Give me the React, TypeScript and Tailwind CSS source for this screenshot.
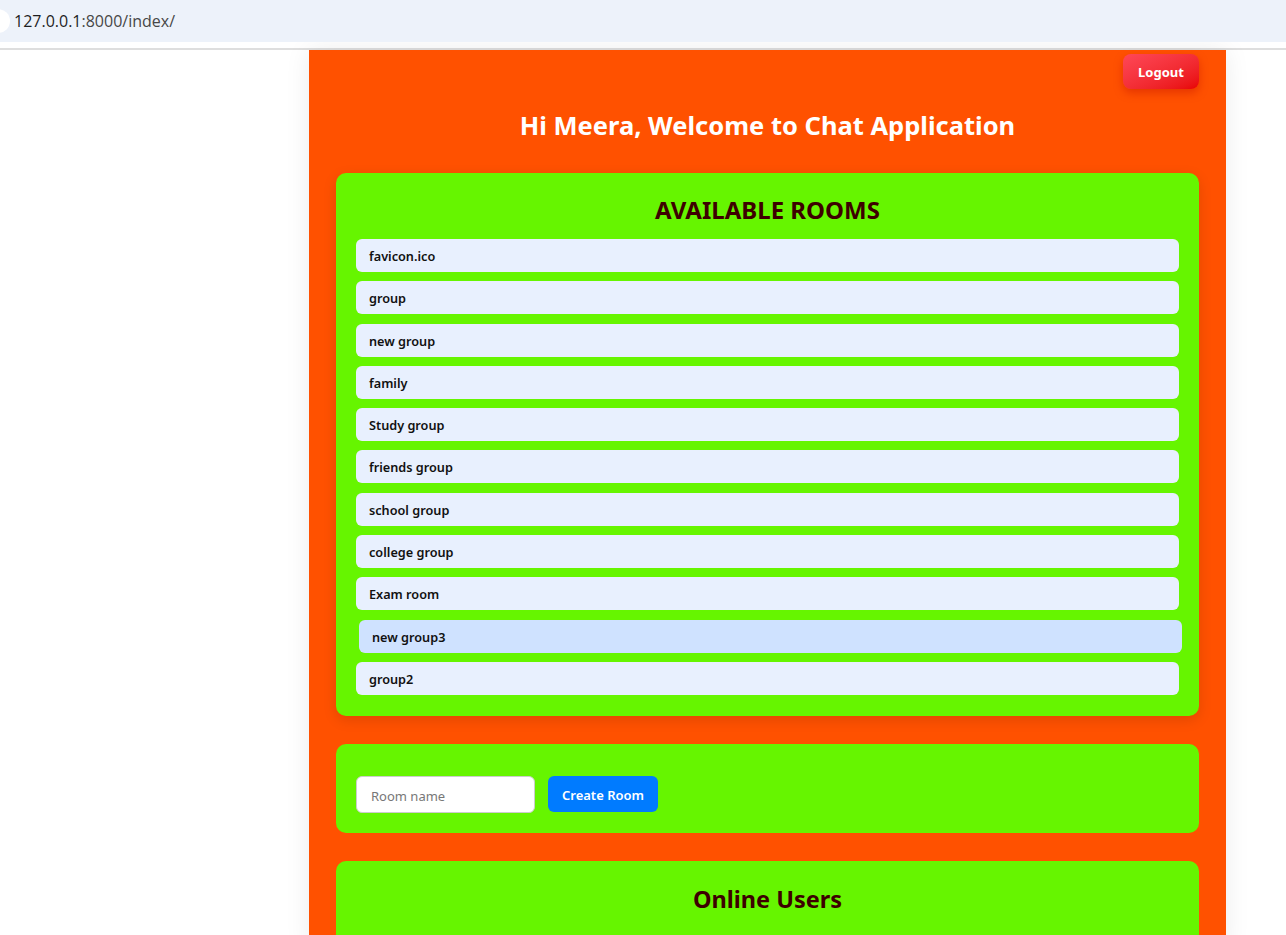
const rooms = [
  "favicon.ico",
  "group",
  "new group",
  "family",
  "Study group",
  "friends group",
  "school group",
  "college group",
  "Exam room",
  "new group3",
  "group2",
];

export default function App() {
  return (
    <div className="min-h-[935px] bg-white font-['Noto_Sans',sans-serif] overflow-hidden h-[935px]">
      {/* BROWSER BAR */}
      <div className="h-[42px] bg-[#edf2fa] flex items-center relative">
        <div className="absolute -left-[14px] top-[9px] w-[24px] h-[24px] rounded-full bg-white"></div>
        <span className="ml-[14px] text-[16px] text-[#1f1f1f] font-['Open_Sans',sans-serif]">
          127.0.0.1<span className="text-[#474747]">:8000/index/</span>
        </span>
      </div>
      <div className="h-[6px] bg-white"></div>
      <div className="h-[2px] bg-[#dedede]"></div>

      {/* PAGE */}
      <div className="ml-[309px] w-[917px] bg-[#ff5100] px-[27px] pt-[4px] shadow-[0_0_24px_rgba(0,0,0,0.08)] h-[900px]">
        <div className="flex justify-end">
          <button className="w-[76px] h-[35px] pt-[2px] rounded-[8px] bg-gradient-to-br from-[#ff4757] to-[#e80000] text-white text-[13px] font-bold shadow-[0_4px_10px_rgba(180,0,0,0.35)]">
            Logout
          </button>
        </div>
        <h1 className="mt-[19px] mb-[31px] text-center text-white text-[25.5px] leading-[34px] font-bold">
          Hi Meera, Welcome to Chat Application
        </h1>

        {/* ROOMS */}
        <div className="bg-[#66f500] rounded-[10px] px-[20px] pt-[21px] pb-[21px] shadow-[0_4px_14px_rgba(0,0,0,0.12)]">
          <h2 className="text-center text-[#3d0000] text-[24px] leading-[32px] font-bold mb-[13px]">
            AVAILABLE ROOMS
          </h2>
          <div className="flex flex-col gap-[9.3px]">
            {rooms.map((r) => (
              <div
                key={r}
                className={
                  r === "new group3"
                    ? "h-[33px] flex items-center pl-[13px] pt-[2px] rounded-[6px] bg-[#cfe2ff] translate-x-[3px] text-[12.7px] font-semibold text-[#111]"
                    : "h-[33px] flex items-center pl-[13px] pt-[2px] rounded-[6px] bg-[#e8f0fe] text-[12.7px] font-semibold text-[#111]"
                }
              >
                {r}
              </div>
            ))}
          </div>
        </div>

        {/* CREATE ROOM */}
        <div className="mt-[28px] bg-[#66f500] rounded-[10px] px-[20px] pt-[32px] pb-[20px] flex items-center gap-[13px]">
          <input
            placeholder="Room name"
            className="w-[179px] h-[37px] rounded-[6px] bg-white border border-[#cccccc] pl-[14px] pt-[3px] text-[13px] placeholder:text-[#777] outline-none"
          />
          <button className="w-[110px] h-[36px] pt-[2px] rounded-[6px] bg-[#007bff] text-white text-[13px] font-semibold">
            Create Room
          </button>
        </div>

        {/* ONLINE USERS */}
        <div className="mt-[28px] bg-[#66f500] rounded-t-[10px] pt-[24px] h-[200px]">
          <h2 className="text-center text-[#3d0000] text-[23.5px] leading-[28px] font-bold">
            Online Users
          </h2>
        </div>
      </div>
    </div>
  );
}
